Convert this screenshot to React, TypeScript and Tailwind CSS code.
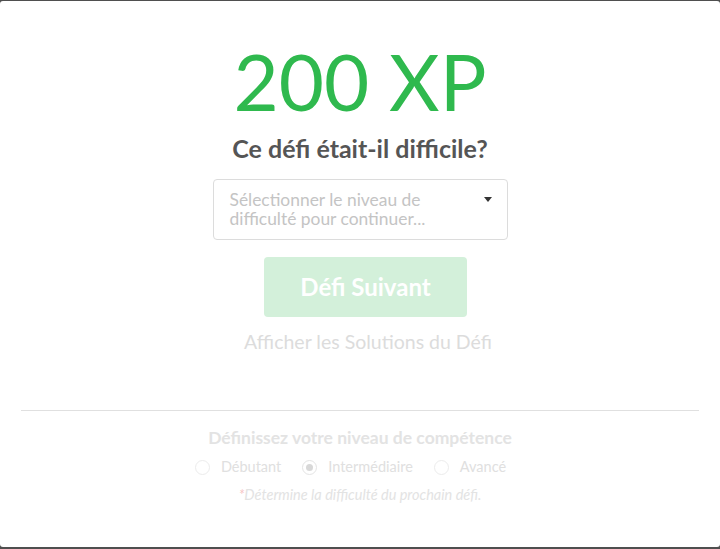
import React from "react";

export default function App() {
  return (
    <div className="h-[549px] w-[720px] bg-[#4f4f4f] pt-px pb-[2px]" style={{ fontFamily: "Lato, 'Open Sans', sans-serif" }}>
      <div className="h-[546px] w-full rounded-[3px] bg-white flex flex-col items-center">
        <div className="mt-[30px] text-[78px] leading-[100px] text-[#2fb94e]">200 XP</div>
        <div className="mt-[2px] text-[25px] leading-[30px] font-bold text-[#555]">Ce défi était-il difficile?</div>
        <div className="mt-[16px] w-[295px] h-[61px] border border-[#dcdcdc] rounded-[4px] flex items-start justify-between pl-[16px] pr-[15px] pt-[10px]">
          <div className="text-[17.4px] leading-[19px] text-[#c4c4c4]">
            Sélectionner le niveau de
            <br />
            difficulté pour continuer...
          </div>
          <div className="mt-[7px] w-0 h-0 border-l-[4px] border-r-[4px] border-t-[5px] border-l-transparent border-r-transparent border-t-[#333]" />
        </div>
        <div className="mt-[17px] ml-[11px] w-[203px] h-[60px] rounded-[4px] bg-[#d3f0da] flex items-center justify-center text-[24px] font-bold text-white">
          Défi Suivant
        </div>
        <div className="mt-[12px] ml-[16px] text-[19.5px] leading-[26px] text-[#dcdcdc]">Afficher les Solutions du Défi</div>
        <div className="mt-[55px] w-[678px] h-px bg-[#e0e0e0]" />
        <div className="mt-[15px] text-[17.5px] leading-[24px] font-bold text-[#e3e3e3]">Définissez votre niveau de compétence</div>
        <div className="mt-[7px] mr-[19px] flex items-center gap-[21px] text-[14.5px] leading-[20px] text-[#e0e0e0]">
          <label className="flex items-center gap-[11px]">
            <span className="w-[15px] h-[15px] rounded-full border border-[#ececec]" />
            Débutant
          </label>
          <label className="flex items-center gap-[11px]">
            <span className="w-[15px] h-[15px] rounded-full border border-[#e4e4e4] flex items-center justify-center">
              <span className="w-[7px] h-[7px] rounded-full bg-[#d8d8d8]" />
            </span>
            Intermédiaire
          </label>
          <label className="flex items-center gap-[11px]">
            <span className="w-[15px] h-[15px] rounded-full border border-[#ececec]" />
            Avancé
          </label>
        </div>
        <div className="mt-[9px] text-[14.5px] leading-[18px] italic text-[#e3e3e3]">
          <span className="text-[#f7c5c5]">*</span>Détermine la difficulté du prochain défi.
        </div>
      </div>
    </div>
  );
}
